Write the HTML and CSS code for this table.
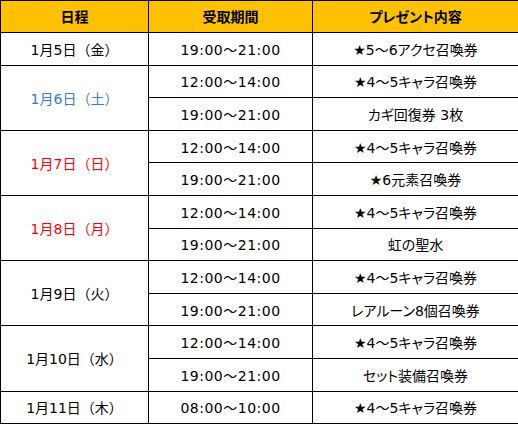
FILE: index.html
```html
<!DOCTYPE html>
<html lang="ja">
<head>
<meta charset="utf-8">
<link rel="stylesheet" href="styles.css">
</head>
<body>
<table class="schedule">
  <colgroup>
    <col class="c-date">
    <col class="c-time">
    <col class="c-gift">
  </colgroup>
  <thead>
    <tr class="head">
      <th>日程</th>
      <th>受取期間</th>
      <th>プレゼント内容</th>
    </tr>
  </thead>
  <tbody>
    <tr><td>1月5日（金）</td><td class="time">19:00～21:00</td><td class="gift">★5～6アクセ召喚券</td></tr>
    <tr><td rowspan="2" class="sat">1月6日（土）</td><td class="time">12:00～14:00</td><td class="gift">★4～5キャラ召喚券</td></tr>
    <tr><td class="time">19:00～21:00</td><td class="gift">カギ回復券 3枚</td></tr>
    <tr><td rowspan="2" class="hol">1月7日（日）</td><td class="time">12:00～14:00</td><td class="gift">★4～5キャラ召喚券</td></tr>
    <tr><td class="time">19:00～21:00</td><td class="gift">★6元素召喚券</td></tr>
    <tr><td rowspan="2" class="hol">1月8日（月）</td><td class="time">12:00～14:00</td><td class="gift">★4～5キャラ召喚券</td></tr>
    <tr><td class="time">19:00～21:00</td><td class="gift">虹の聖水</td></tr>
    <tr><td rowspan="2">1月9日（火）</td><td class="time">12:00～14:00</td><td class="gift">★4～5キャラ召喚券</td></tr>
    <tr><td class="time">19:00～21:00</td><td class="gift">レアルーン8個召喚券</td></tr>
    <tr><td rowspan="2">1月10日（水）</td><td class="time">12:00～14:00</td><td class="gift">★4～5キャラ召喚券</td></tr>
    <tr><td class="time">19:00～21:00</td><td class="gift">セット装備召喚券</td></tr>
    <tr><td>1月11日（木）</td><td class="time">08:00～10:00</td><td class="gift">★4～5キャラ召喚券</td></tr>
  </tbody>
</table>
</body>
</html>
```
FILE: styles.css
```css
html, body {
  margin: 0;
  padding: 0;
  background: #ffffff;
}
.schedule {
  border-collapse: collapse;
  table-layout: fixed;
  width: 518px;
  font-family: "DejaVu Sans", "Noto Sans CJK JP", sans-serif;
  font-size: 14px;
  color: #000000;
}
.c-date { width: 148px; }
.c-time { width: 164px; }
.c-gift { width: 206px; }
.schedule th,
.schedule td {
  border: 1px solid #000000;
  padding: 0;
  text-align: center;
  vertical-align: middle;
  line-height: 1;
}
.schedule td {
  padding-top: 2px;
}
.head {
  height: 32px;
  background: #ffc000;
}
.head th {
  font-weight: bold;
  font-size: 14px;
  font-feature-settings: "palt";
}
.gift {
  font-feature-settings: "palt";
}
.time {
  letter-spacing: 0.5px;
}
.schedule tbody tr {
  height: 32.6px;
}
.sat { color: #3a7bd5; }
.hol { color: #ff0000; }
```
